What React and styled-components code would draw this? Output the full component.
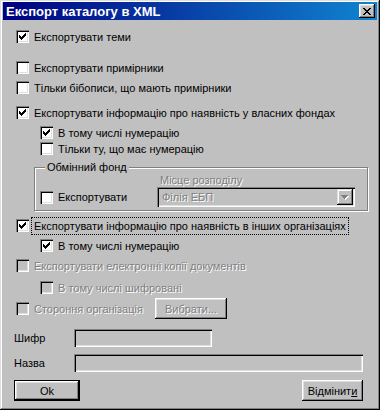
import styled, { createGlobalStyle } from "styled-components"

const GlobalStyle = createGlobalStyle`
	body {
		margin: 0;
		background: #c0c0c0;
	}
`

const Window = styled.div`
	box-sizing: border-box;
	width: 380px;
	height: 410px;
	padding: 2px 3px 3px 3px;
	background: #c0c0c0;
	box-shadow: inset -1px -1px #000, inset 1px 1px #dfdfdf, inset -2px -2px #808080, inset 2px 2px #fff;
	display: flex;
	flex-direction: column;
	font-family: "Liberation Sans", Arial, sans-serif;
	font-size: 11px;
	color: #000;
`
const TitleBar = styled.div`
	height: 18px;
	display: flex;
	align-items: center;
	justify-content: space-between;
	padding: 0 2px 0 3px;
	background: linear-gradient(to right, #000080, #1084d0);
	color: #fff;
	font-weight: bold;
	font-size: 13px;
`
const CloseButton = styled.div`
	width: 16px;
	height: 14px;
	display: flex;
	align-items: center;
	justify-content: center;
	background: #c0c0c0;
	box-shadow: inset -1px -1px #000, inset 1px 1px #fff, inset -2px -2px #808080, inset 2px 2px #dfdfdf;
`
const Content = styled.div`
	flex: 1;
	display: flex;
	flex-direction: column;
	padding: 0 14px 0 11px;
`
const Row = styled.label`
	display: flex;
	align-items: center;
	gap: 5px;
	height: 13px;
	margin-top: ${p => p.$top || 0}px;
	margin-left: ${p => p.$indent || 2}px;
	white-space: nowrap;
`
const Text = styled.span`
	color: ${p => (p.$disabled ? "#808080" : "#000")};
	text-shadow: ${p => (p.$disabled ? "1px 1px 0 #fff" : "none")};
	outline: ${p => (p.$focused ? "1px dotted #000" : "none")};
	outline-offset: 2px;
`
const Box = styled.span`
	flex: none;
	width: 13px;
	height: 13px;
	display: flex;
	align-items: center;
	justify-content: center;
	background: ${p => (p.$disabled ? "#c0c0c0" : "#fff")};
	box-shadow: inset 1px 1px #808080, inset 2px 2px #000, inset -1px -1px #fff, inset -2px -2px #dfdfdf;
`
const Group = styled.fieldset`
	margin: 6px 0 0 20px;
	width: 334px;
	box-sizing: border-box;
	padding: 0 12px 3px 5px;
	border: 1px solid #808080;
	box-shadow: 1px 1px 0 #fff, inset 1px 1px 0 #fff;
	display: grid;
	grid-template-columns: 1fr 198px;
	grid-template-rows: 13px 20px;
`
const Legend = styled.legend`
	padding: 0 2px;
	margin-left: 5px;
	height: 13px;
	line-height: 13px;
	background: #c0c0c0;
`
const PlaceLabel = styled.div`
	grid-column: 2;
	padding-left: 3px;
	line-height: 13px;
	color: #808080;
	text-shadow: 1px 1px 0 #fff;
`
const GroupCheck = styled.label`
	grid-column: 1;
	grid-row: 2;
	display: flex;
	align-items: center;
	gap: 5px;
`
const Combo = styled.div`
	grid-column: 2;
	grid-row: 2;
	display: flex;
	align-items: center;
	justify-content: space-between;
	padding: 2px;
	background: #c0c0c0;
	box-shadow: inset 1px 1px #808080, inset 2px 2px #000, inset -1px -1px #fff, inset -2px -2px #dfdfdf;
`
const ComboText = styled.span`
	padding-left: 3px;
	color: #808080;
	text-shadow: 1px 1px 0 #fff;
`
const ComboButton = styled.span`
	width: 16px;
	height: 16px;
	display: flex;
	align-items: center;
	justify-content: center;
	background: #c0c0c0;
	box-shadow: inset -1px -1px #000, inset 1px 1px #dfdfdf, inset -2px -2px #808080, inset 2px 2px #fff;
`
const ButtonRow = styled.div`
	display: grid;
	grid-template-columns: 139px auto;
	align-items: center;
	justify-content: start;
	margin-top: 4px;
	margin-left: 2px;
	height: 21px;
`
const RowCheck = styled.label`
	display: flex;
	align-items: center;
	gap: 5px;
	white-space: nowrap;
`
const Button = styled.button`
	box-sizing: border-box;
	width: ${p => p.$width}px;
	height: ${p => p.$height || 21}px;
	padding: 0;
	border: ${p => (p.$default ? "1px solid #000" : "none")};
	background: #c0c0c0;
	box-shadow: inset -1px -1px #000, inset 1px 1px #fff, inset -2px -2px #808080, inset 2px 2px #dfdfdf;
	font-family: inherit;
	font-size: 11px;
	color: ${p => (p.$disabled ? "#808080" : "#000")};
	text-shadow: ${p => (p.$disabled ? "1px 1px 0 #fff" : "none")};
	cursor: default;
`
const Field = styled.div`
	display: grid;
	grid-template-columns: 60px 1fr;
	align-items: center;
	margin-top: ${p => p.$top}px;
`
const Input = styled.div`
	width: ${p => (p.$width ? `${p.$width}px` : "auto")};
	height: 18px;
	background: #c0c0c0;
	box-shadow: inset 1px 1px #808080, inset 2px 2px #000, inset -1px -1px #fff, inset -2px -2px #dfdfdf;
`
const Footer = styled.div`
	display: flex;
	justify-content: space-between;
	margin-top: 8px;
`
const Underline = styled.span`
	text-decoration: underline;
`

const checkPixels = [
	[6, 0], [5, 1], [6, 1], [0, 2], [4, 2], [5, 2], [6, 2],
	[0, 3], [1, 3], [3, 3], [4, 3], [5, 3],
	[0, 4], [1, 4], [2, 4], [3, 4], [4, 4],
	[1, 5], [2, 5], [3, 5], [2, 6]
]

const closePixels = [
	[0, 0], [1, 0], [6, 0], [7, 0],
	[1, 1], [2, 1], [5, 1], [6, 1],
	[2, 2], [3, 2], [4, 2], [5, 2],
	[3, 3], [4, 3],
	[2, 4], [3, 4], [4, 4], [5, 4],
	[1, 5], [2, 5], [5, 5], [6, 5],
	[0, 6], [1, 6], [6, 6], [7, 6]
]

const Pixels = ({ points, w, h, color }) => (
	<svg width={w} height={h} viewBox={`0 0 ${w} ${h}`} shapeRendering="crispEdges">
		{points.map(([x, y]) => (
			<rect key={`${x}-${y}`} x={x} y={y} width="1" height="1" fill={color} />
		))}
	</svg>
)

const Check = ({ checked, disabled }) => (
	<Box $disabled={disabled}>
		{checked && <Pixels points={checkPixels} w={7} h={7} color="#000" />}
	</Box>
)

const CheckRow = ({ label, checked, disabled, focused, top, indent }) => (
	<Row $top={top} $indent={indent}>
		<Check checked={checked} disabled={disabled} />
		<Text $disabled={disabled} $focused={focused}>{label}</Text>
	</Row>
)

const Arrow = () => (
	<svg width="8" height="5" viewBox="0 0 8 5" shapeRendering="crispEdges">
		<path d="M1 1h7l-3.5 4z" fill="#fff" />
		<path d="M0 0h7l-3.5 4z" fill="#808080" />
	</svg>
)

const App = () => {
	return (
		<Window>
			<GlobalStyle />
			<TitleBar>
				<span>Експорт каталогу в XML</span>
				<CloseButton>
					<Pixels points={closePixels} w={8} h={7} color="#000" />
				</CloseButton>
			</TitleBar>
			<Content>
				<CheckRow top={10} checked label="Експортувати теми" />
				<CheckRow top={18} label="Експортувати примірники" />
				<CheckRow top={7} label="Тільки бібописи, що мають примірники" />
				<CheckRow top={12} checked label="Експортувати інформацію про наявність у власних фондах" />
				<CheckRow top={7} indent={26} checked label="В тому числі нумерацію" />
				<CheckRow top={3} indent={26} label="Тільки ту, що має нумерацію" />
				<Group>
					<Legend>Обмінний фонд</Legend>
					<PlaceLabel>Місце розподілу</PlaceLabel>
					<GroupCheck>
						<Check />
						<span>Експортувати</span>
					</GroupCheck>
					<Combo>
						<ComboText>Філія ЕБП</ComboText>
						<ComboButton>
							<Arrow />
						</ComboButton>
					</Combo>
				</Group>
				<CheckRow top={8} checked focused label="Експортувати інформацію про наявність в інших організаціях" />
				<CheckRow top={7} indent={26} checked label="В тому числі нумерацію" />
				<CheckRow top={7} disabled label="Експортувати електронні копії документів" />
				<CheckRow top={9} indent={26} disabled label="В тому числі шифровані" />
				<ButtonRow>
					<RowCheck>
						<Check disabled />
						<Text $disabled>Стороння організація</Text>
					</RowCheck>
					<Button $width={72} $disabled>Вибрати...</Button>
				</ButtonRow>
				<Field $top={10}>
					<span>Шифр</span>
					<Input $width={138} />
				</Field>
				<Field $top={7}>
					<span>Назва</span>
					<Input />
				</Field>
				<Footer>
					<Button $width={66} $height={21} $default>Ok</Button>
					<Button $width={61}>Відмінит<Underline>и</Underline></Button>
				</Footer>
			</Content>
		</Window>
	)
}

export default App
